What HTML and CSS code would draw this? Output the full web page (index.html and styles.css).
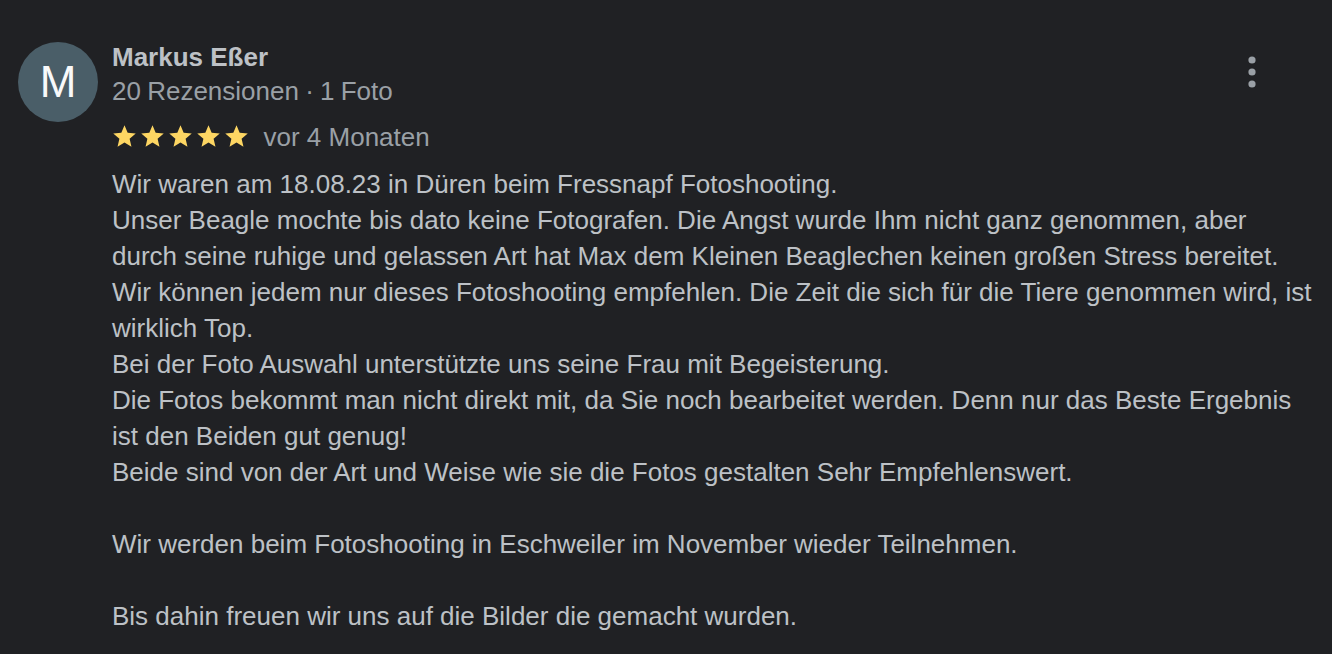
FILE: index.html
```html
<!DOCTYPE html>
<html lang="de">
<head>
<meta charset="utf-8">
<title>Rezension</title>
<link rel="stylesheet" href="styles.css">
</head>
<body>
<div class="review">
  <div class="avatar">M</div>
  <div class="main">
    <div class="header">
      <div class="who">
        <div class="name">Markus Eßer</div>
        <div class="meta">20 Rezensionen · 1 Foto</div>
      </div>
      <button class="menu" aria-label="Mehr">
        <svg width="24" height="32" viewBox="0 0 24 32"><circle cx="12" cy="4" r="3.6"/><circle cx="12" cy="16" r="3.6"/><circle cx="12" cy="28" r="3.6"/></svg>
      </button>
    </div>
    <div class="rating">
      <span class="stars">
        <svg viewBox="0 0 24 24"><path d="M12 17.27L18.18 21l-1.64-7.03L22 9.24l-7.19-.61L12 2 9.19 8.63 2 9.24l5.46 4.73L5.82 21z"/></svg>
        <svg viewBox="0 0 24 24"><path d="M12 17.27L18.18 21l-1.64-7.03L22 9.24l-7.19-.61L12 2 9.19 8.63 2 9.24l5.46 4.73L5.82 21z"/></svg>
        <svg viewBox="0 0 24 24"><path d="M12 17.27L18.18 21l-1.64-7.03L22 9.24l-7.19-.61L12 2 9.19 8.63 2 9.24l5.46 4.73L5.82 21z"/></svg>
        <svg viewBox="0 0 24 24"><path d="M12 17.27L18.18 21l-1.64-7.03L22 9.24l-7.19-.61L12 2 9.19 8.63 2 9.24l5.46 4.73L5.82 21z"/></svg>
        <svg viewBox="0 0 24 24"><path d="M12 17.27L18.18 21l-1.64-7.03L22 9.24l-7.19-.61L12 2 9.19 8.63 2 9.24l5.46 4.73L5.82 21z"/></svg>
      </span>
      <span class="date">vor 4 Monaten</span>
    </div>
    <div class="text">Wir waren am 18.08.23 in Düren beim Fressnapf Fotoshooting.
Unser Beagle mochte bis dato keine Fotografen. Die Angst wurde Ihm nicht ganz genommen, aber durch seine ruhige und gelassen Art hat Max dem Kleinen Beaglechen keinen großen Stress bereitet.
Wir können jedem nur dieses Fotoshooting empfehlen. Die Zeit die sich für die Tiere genommen wird, ist wirklich Top.
Bei der Foto Auswahl unterstützte uns seine Frau mit Begeisterung.
Die Fotos bekommt man nicht direkt mit, da Sie noch bearbeitet werden. Denn nur das Beste Ergebnis ist den Beiden gut genug!
Beide sind von der Art und Weise wie sie die Fotos gestalten Sehr Empfehlenswert.

Wir werden beim Fotoshooting in Eschweiler im November wieder Teilnehmen.

Bis dahin freuen wir uns auf die Bilder die gemacht wurden.</div>
  </div>
</div>
</body>
</html>
```

FILE: styles.css
```css
html, body {
  margin: 0;
  padding: 0;
  background: #202124;
}

body {
  font-family: "Liberation Sans", Arial, Helvetica, sans-serif;
  color: #bdc1c6;
  height: 654px;
  overflow: hidden;
}

.review {
  display: flex;
  gap: 14px;
  padding: 40px 18px 0 18px;
}

.avatar {
  flex: 0 0 80px;
  width: 80px;
  height: 80px;
  margin-top: 2px;
  border-radius: 50%;
  background: #4a5e68;
  color: #f8f9fa;
  font-size: 44px;
  line-height: 80px;
  text-align: center;
}

.main {
  flex: 1;
  min-width: 0;
}

.header {
  display: flex;
  justify-content: space-between;
  align-items: flex-start;
}

.name {
  font-size: 26px;
  font-weight: bold;
  line-height: 34px;
  color: #bdc1c6;
}

.meta {
  font-size: 26px;
  line-height: 34px;
  color: #9aa0a6;
  word-spacing: -1px;
}

.menu {
  margin: 16px 50px 0 0;
  padding: 0;
  border: 0;
  background: none;
  width: 24px;
  height: 32px;
  fill: #9aa0a6;
}

.menu svg {
  display: block;
}

.rating {
  display: flex;
  align-items: center;
  gap: 14px;
  height: 36px;
  margin-top: 11px;
}

.stars {
  display: flex;
  gap: 1px;
  margin: -2px 0 0 -1.5px;
}

.stars svg {
  display: block;
  width: 27px;
  height: 27px;
  fill: #fdd663;
}

.date {
  font-size: 26px;
  line-height: 36px;
  color: #9aa0a6;
}

.text {
  margin-top: 11px;
  font-size: 26px;
  line-height: 36px;
  white-space: pre-line;
  color: #bdc1c6;
}
```
